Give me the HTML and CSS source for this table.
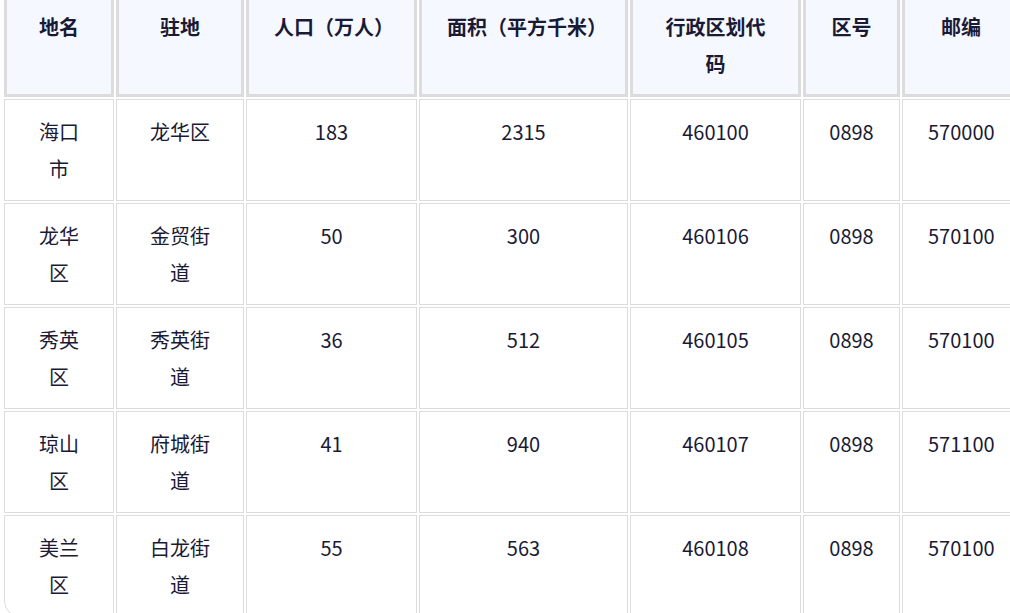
FILE: index.html
```html
<!DOCTYPE html>
<html lang="zh-CN">
<head>
<meta charset="utf-8">
<title>海口市行政区划</title>
<link rel="stylesheet" href="styles.css">
</head>
<body>
<div class="wrap">
<table class="data">
  <thead>
    <tr>
      <th class="c1">地名</th>
      <th class="c2">驻地</th>
      <th class="c3">人口（万人）</th>
      <th class="c4">面积（平方千米）</th>
      <th class="c5">行政区划代码</th>
      <th class="c6">区号</th>
      <th class="c7">邮编</th>
    </tr>
  </thead>
  <tbody>
    <tr><td>海口市</td><td>龙华区</td><td>183</td><td>2315</td><td>460100</td><td>0898</td><td>570000</td></tr>
    <tr><td>龙华区</td><td>金贸街道</td><td>50</td><td>300</td><td>460106</td><td>0898</td><td>570100</td></tr>
    <tr><td>秀英区</td><td>秀英街道</td><td>36</td><td>512</td><td>460105</td><td>0898</td><td>570100</td></tr>
    <tr><td>琼山区</td><td>府城街道</td><td>41</td><td>940</td><td>460107</td><td>0898</td><td>571100</td></tr>
    <tr><td>美兰区</td><td>白龙街道</td><td>55</td><td>563</td><td>460108</td><td>0898</td><td>570100</td></tr>
  </tbody>
</table>
</div>
</body>
</html>
```
FILE: styles.css
```css
html, body {
  margin: 0;
  padding: 0;
  background: #ffffff;
  overflow: hidden;
}

.wrap {
  width: 1010px;
  height: 613px;
  overflow: hidden;
}

.data {
  margin: -11px 0 0 2px;
  border-collapse: separate;
  border-spacing: 2px;
  table-layout: fixed;
  width: 1020px;
  font-family: "Noto Sans CJK SC", "Noto Sans", sans-serif;
  font-size: 20px;
  line-height: 37px;
  color: #1a1a36;
}

.data th,
.data td {
  box-sizing: border-box;
  padding: 14px 25px 12px;
  text-align: center;
  vertical-align: top;
}

.data th {
  background: #f5f8ff;
  border: 3px solid #dcdcdc;
  font-weight: 700;
}

.data td {
  padding-top: 13px;
  padding-bottom: 13px;
  background: #ffffff;
  border: 1px solid #dcdcdc;
  height: 102px;
}

.data tbody tr:last-child td:first-child {
  border-bottom-left-radius: 16px;
}

.c1 { width: 110px; }
.c2 { width: 128px; }
.c3 { width: 171px; }
.c4 { width: 209px; }
.c5 { width: 171px; }
.c6 { width: 97px; }
.c7 { width: 118px; }
```
